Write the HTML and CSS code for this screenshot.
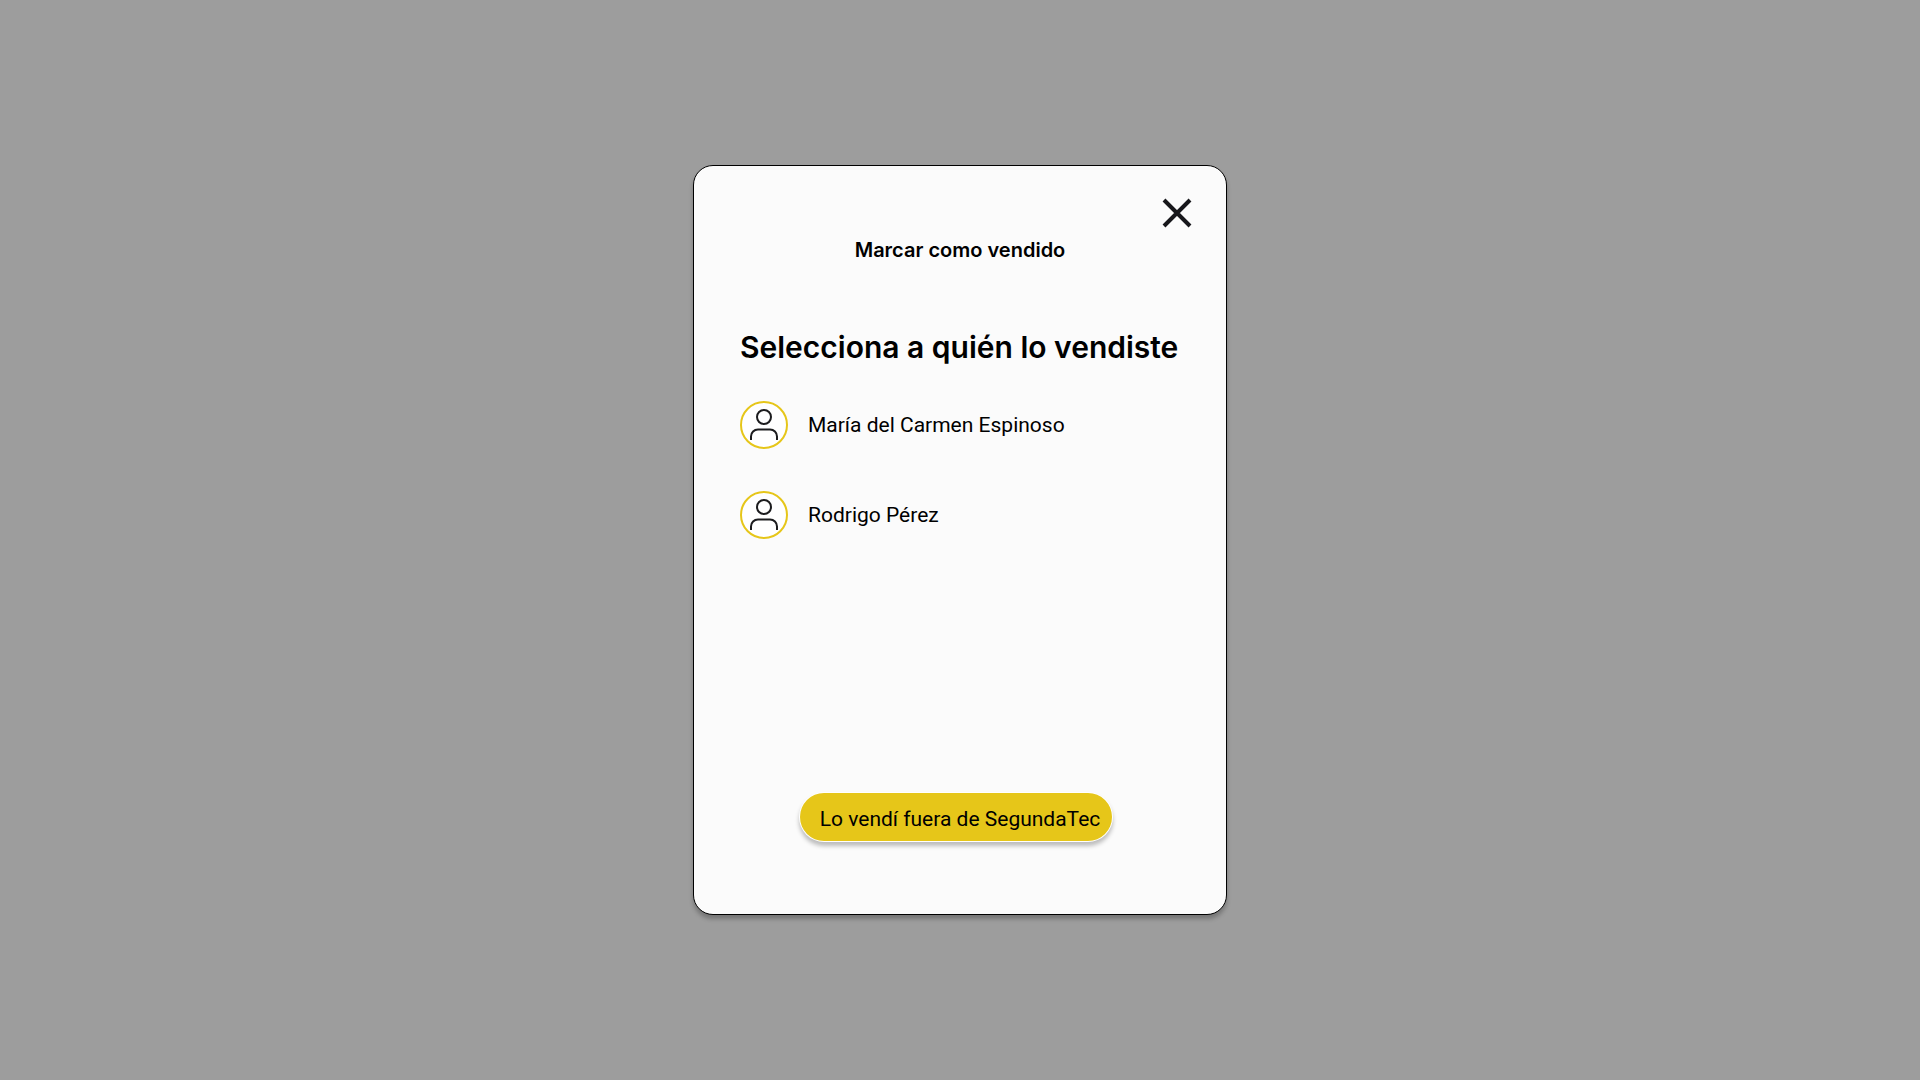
FILE: index.html
```html
<!DOCTYPE html>
<html lang="es">
<head>
<meta charset="utf-8">
<meta name="viewport" content="width=device-width, initial-scale=1">
<title>Marcar como vendido</title>
<link rel="stylesheet" href="styles.css">
</head>
<body>
<main class="overlay">
  <section class="dialog" role="dialog" aria-modal="true" aria-labelledby="dialog-title">
    <header class="dialog-header">
      <button class="close" type="button" aria-label="Cerrar">
        <svg class="close-icon" viewBox="0 0 30 30" aria-hidden="true"><path d="M2 2 28 28M28 2 2 28"/></svg>
      </button>
      <h1 class="title" id="dialog-title">Marcar como vendido</h1>
    </header>
    <h2 class="question">Selecciona a quién lo vendiste</h2>
    <ul class="buyers">
      <li>
        <button class="buyer" type="button">
          <svg class="avatar" viewBox="0 0 48 48" aria-hidden="true">
            <circle class="ring" cx="24" cy="24" r="23"/>
            <circle class="person" cx="24" cy="16" r="7"/>
            <path class="person" d="M11 39v-3.500a7 7 0 0 1 7-7h12a7 7 0 0 1 7 7v3.500"/>
          </svg>
          <span>María del Carmen Espinoso</span>
        </button>
      </li>
      <li>
        <button class="buyer" type="button">
          <svg class="avatar" viewBox="0 0 48 48" aria-hidden="true">
            <circle class="ring" cx="24" cy="24" r="23"/>
            <circle class="person" cx="24" cy="16" r="7"/>
            <path class="person" d="M11 39v-3.500a7 7 0 0 1 7-7h12a7 7 0 0 1 7 7v3.500"/>
          </svg>
          <span>Rodrigo Pérez</span>
        </button>
      </li>
    </ul>
    <button class="outside" type="button">Lo vendí fuera de SegundaTec</button>
  </section>
</main>
</body>
</html>
```

FILE: styles.css
```css
* {
  box-sizing: border-box;
}

body {
  margin: 0;
  background: #9d9d9d;
  color: #000;
  font-family: Roboto, sans-serif;
}

button {
  margin: 0;
  border: 0;
  padding: 0;
  background: none;
  color: inherit;
  font: inherit;
  cursor: pointer;
}

.overlay {
  display: flex;
  align-items: center;
  justify-content: center;
  min-height: 100vh;
}

.dialog {
  display: flex;
  flex-direction: column;
  width: 100%;
  max-width: 534px;
  min-height: 750px;
  padding: 32px 34px 73px 46px;
  border: 1px solid #000;
  border-radius: 20px;
  background: #fbfbfb;
  box-shadow: 0 4px 4px rgba(0, 0, 0, 0.25);
}

.dialog-header {
  display: flex;
  flex-direction: column;
}

.close {
  align-self: flex-end;
  width: 30px;
  height: 30px;
}

.close-icon {
  display: block;
  width: 30px;
  height: 30px;
  fill: none;
  stroke: #17171b;
  stroke-width: 4;
}

.title {
  margin: 10px 12px 0 0;
  font: 600 20px/24px Inter, sans-serif;
  text-align: center;
}

.question {
  margin: 65px 0 0;
  font: 600 30px/40px Inter, sans-serif;
  white-space: nowrap;
}

.buyers {
  display: flex;
  flex-direction: column;
  gap: 42px;
  margin: 34px 0 0;
  padding: 0;
  list-style: none;
}

.buyer {
  display: flex;
  align-items: center;
  gap: 20px;
  font-size: 21px;
  line-height: 24px;
}

.avatar {
  width: 48px;
  height: 48px;
  fill: none;
}

.ring {
  fill: #fff;
  stroke: #e6c619;
  stroke-width: 2;
}

.person {
  stroke: #1c1c1e;
  stroke-width: 2;
}

.outside {
  align-self: center;
  margin: auto 20px 0 0;
  padding: 14px 12px 10px 20px;
  border-radius: 24px;
  background: #e6c619;
  box-shadow: 0 0 0 1px #fff, 0 4px 4px 1px rgba(0, 0, 0, 0.25);
  font-size: 21px;
  line-height: 24px;
}
```
